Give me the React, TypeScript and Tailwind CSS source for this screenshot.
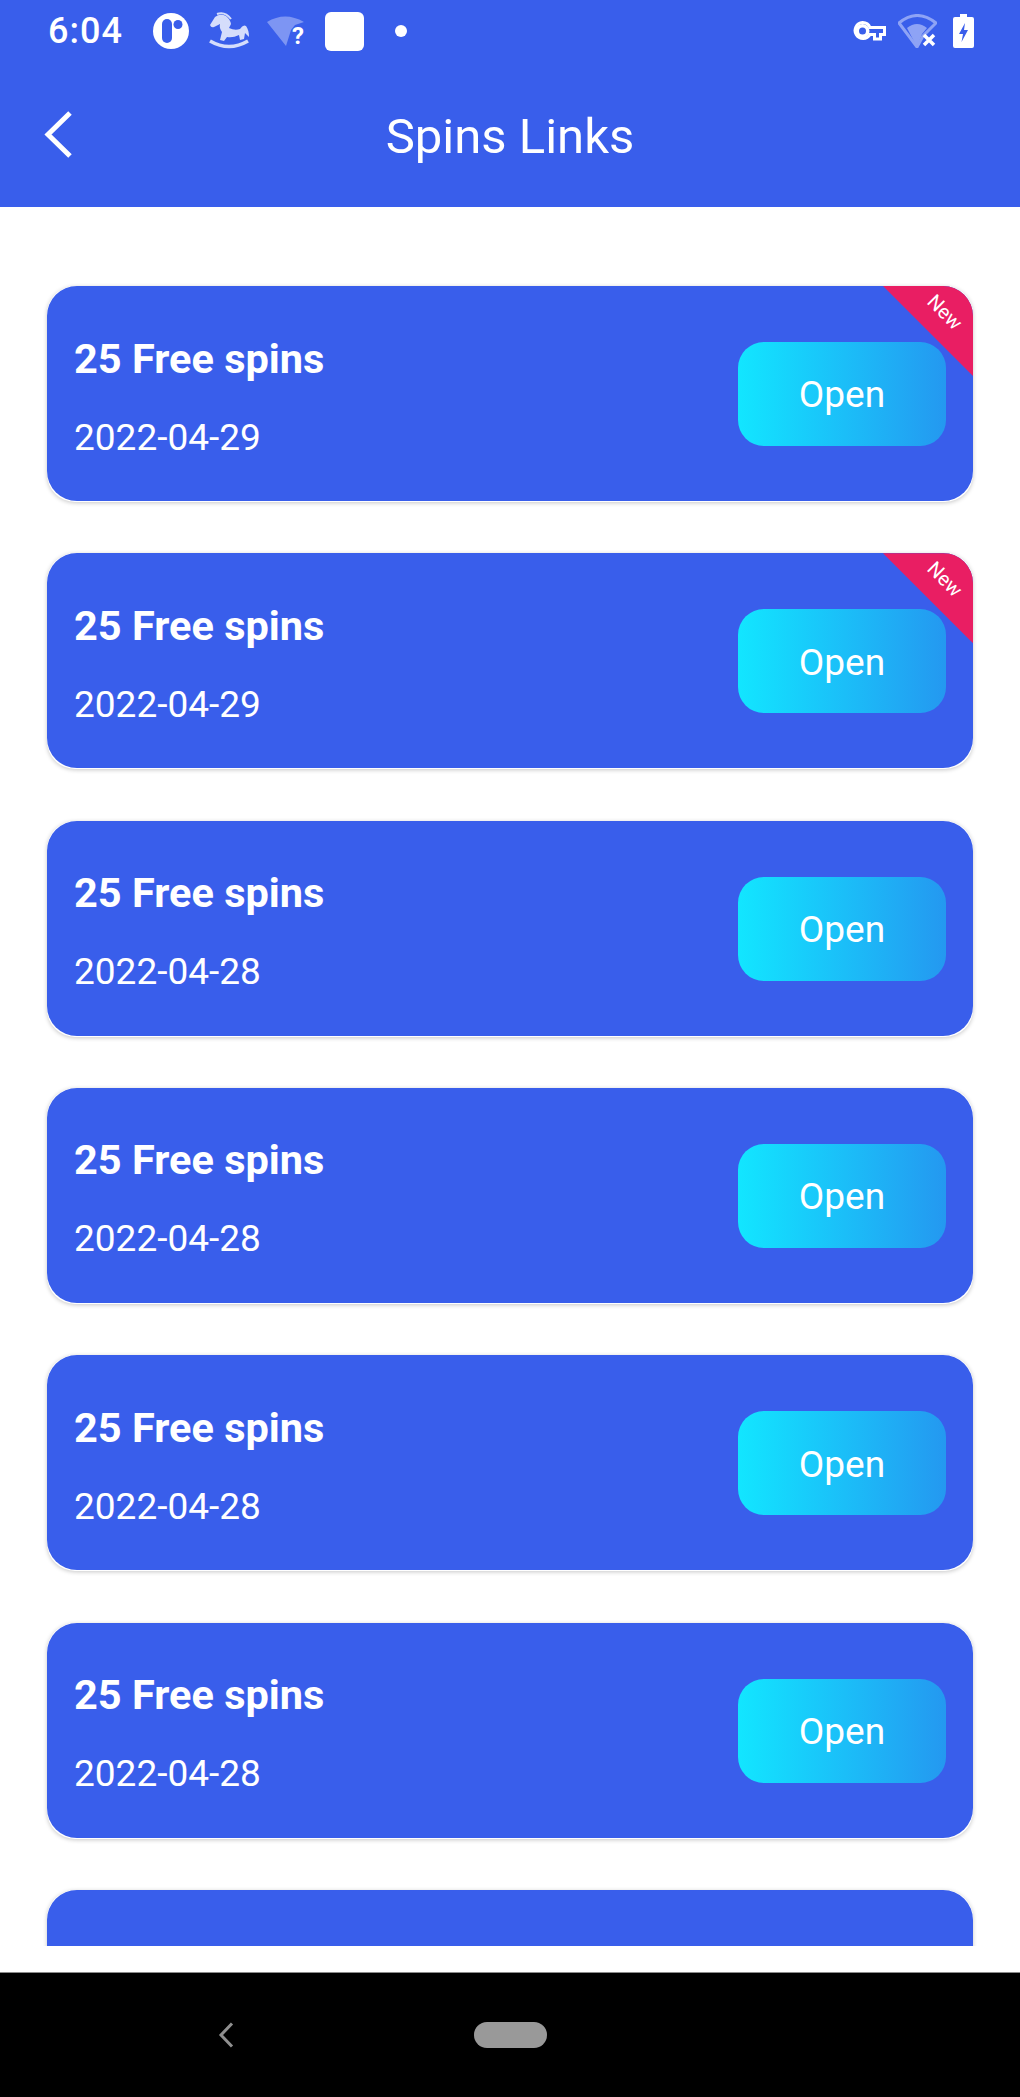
const font = { fontFamily: "Roboto, sans-serif" };

const links = [
  { date: "2022-04-29", isNew: true },
  { date: "2022-04-29", isNew: true },
  { date: "2022-04-28", isNew: false },
  { date: "2022-04-28", isNew: false },
  { date: "2022-04-28", isNew: false },
  { date: "2022-04-28", isNew: false },
  { date: "2022-04-28", isNew: false },
];

const StatusBar = () => (
  <div className="flex h-[62px] items-center pl-[48px] pr-[46px]">
    <span className="w-[105px] text-[36px] font-medium leading-none tracking-[1px] text-white">6:04</span>

    {/* app icon */}
    <svg width="36" height="36" viewBox="0 0 36 36" className="mb-[1px]">
      <circle cx="18" cy="18" r="18" fill="#fff" />
      <rect x="9" y="6" width="10" height="24" rx="5" fill="#395eeb" />
      <circle cx="25" cy="11.5" r="4.5" fill="#395eeb" />
    </svg>

    {/* rocking horse */}
    <svg width="40" height="38" viewBox="0 0 40 38" className="ml-[20px]">
      <path
        d="M1 13 L6 5 Q11 1 17 4 Q21 7 22 12 L20 16 Q26 19 31 17 Q34 12 37 14 Q40 18 40 25 L36 21 L35 27 L31 28 L30 23 Q24 26 18 25 L15 29 L11 28 L13 20 Q10 16 11 12 L5 15 Q2 16 1 13 Z"
        fill="#d5ddfb"
      />
      <path d="M8 2 Q16 -1 22 7" fill="none" stroke="#d5ddfb" strokeWidth="2" />
      <path d="M1 29 Q20 40 39 29" fill="none" stroke="#d5ddfb" strokeWidth="3.5" />
    </svg>

    {/* wifi with question mark */}
    <svg width="38" height="32" viewBox="0 0 38 32" className="ml-[18px]">
      <path d="M0 7 Q18 -4 37 7 L28 10 L24 15 L19 31 Z" fill="#7d95f3" />
      <text x="25" y="29" fontSize="24" fontWeight="700" fill="#fff" style={font}>?</text>
    </svg>

    <div className="ml-[20px] h-[39px] w-[39px] rounded-[6px] bg-white" />
    <div className="ml-[31px] h-[12px] w-[12px] rounded-full bg-white" />

    <div className="flex-1" />

    {/* vpn key */}
    <svg width="33" height="20" viewBox="0 0 33 20">
      <path
        d="M9.500 1.500 A8 8 0 0 1 17 6.500 H31.500 V13.500 H27.500 V18 H21.500 V13.500 H17 A8 8 0 1 1 9.500 1.500 Z"
        fill="none"
        stroke="#fff"
        strokeWidth="3"
      />
      <path
        fillRule="evenodd"
        d="M9.500 3 A7 7 0 1 1 9.500 17 A7 7 0 1 1 9.500 3 Z M9.500 6.500 A3.500 3.500 0 1 0 9.500 13.500 A3.500 3.500 0 1 0 9.500 6.500 Z"
        fill="#fff"
      />
    </svg>

    {/* wifi off */}
    <svg width="39" height="34" viewBox="0 0 39 34" className="ml-[12px]">
      <path d="M1 9 Q19 -6 38 9 L25 22 L19 33 Z" fill="none" stroke="#8ea3f5" strokeWidth="3" />
      <path d="M9 14 Q19 6 29 14 L24 20 L19 33 Z" fill="#8ea3f5" />
      <path d="M26 21 L36 31 M36 21 L26 31" stroke="#fff" strokeWidth="3.5" />
    </svg>

    {/* battery charging */}
    <svg width="21" height="34" viewBox="0 0 21 34" className="ml-[16px]">
      <path
        d="M7 0 H14 V3 H19 Q21 3 21 5 V32 Q21 34 19 34 H2 Q0 34 0 32 V5 Q0 3 2 3 H7 Z"
        fill="#fff"
      />
      <path d="M12 9 L6 20 H10 L8.5 28 L15 16 H11 Z" fill="#395eeb" />
    </svg>
  </div>
);

const AppBar = () => (
  <div className="grid h-[145px] grid-cols-[1fr_auto_1fr] items-center pt-[4px]">
    <svg width="30" height="50" viewBox="0 0 30 50" className="mb-[4px] ml-[43px]">
      <path d="M27 3 L5 24.500 L27 46" fill="none" stroke="#fff" strokeWidth="5" />
    </svg>
    <h1 className="text-[49px] font-normal leading-none text-white">Spins Links</h1>
    <div />
  </div>
);

const LinkCard = ({ date, isNew }: { date: string; isNew: boolean }) => (
  <div className="h-[216px] shrink-0 rounded-[28px] bg-white shadow-[0_1px_4px_rgba(0,0,0,0.22)]">
    <div className="relative flex h-[215px] items-center justify-between overflow-hidden rounded-[30px] bg-[#395eeb] px-[27px]">
      <div className="flex flex-col gap-[34px] pt-[8px]">
        <div className="text-[41.500px] font-bold leading-[45px] text-white">25 Free spins</div>
        <div className="text-[37px] leading-[45px] text-white">{date}</div>
      </div>

      <button className="mt-[1px] flex h-[104px] w-[208px] items-center justify-center rounded-[26px] bg-gradient-to-r from-[#12e6ff] to-[#2498f0] pt-[2px] text-[37px] text-white">
        Open
      </button>

      {isNew && (
        <div className="absolute right-0 top-0 h-[90px] w-[90px] bg-[#e91e63] [clip-path:polygon(0_0,100%_0,100%_100%)]">
          <span className="absolute left-[42px] top-[14px] rotate-45 text-[20px] leading-[24px] text-white">New</span>
        </div>
      )}
    </div>
  </div>
);

export default function App() {
  return (
    <div className="flex h-[2097px] w-[1020px] flex-col overflow-hidden bg-white" style={font}>
      <header className="h-[207px] shrink-0 bg-[#395eeb]">
        <StatusBar />
        <AppBar />
      </header>

      <main className="min-h-0 flex-1 pb-[26px]">
        <div className="flex h-full flex-col gap-[51.330px] overflow-hidden px-[47px] pt-[79px]">
          {links.map((link, i) => (
            <LinkCard key={i} date={link.date} isNew={link.isNew} />
          ))}
        </div>
      </main>

      {/* Android nav bar */}
      <footer className="flex h-[125px] shrink-0 items-center border-t border-[#8a8a8a] bg-black pl-[218px]">
        <svg width="16" height="26" viewBox="0 0 16 26">
          <path d="M14 1.500 L3 13 L14 24.500" fill="none" stroke="#8f8f8f" strokeWidth="3" />
        </svg>
        <div className="ml-[240px] h-[26px] w-[73px] rounded-[13px] bg-[#999999]" />
      </footer>
    </div>
  );
}
